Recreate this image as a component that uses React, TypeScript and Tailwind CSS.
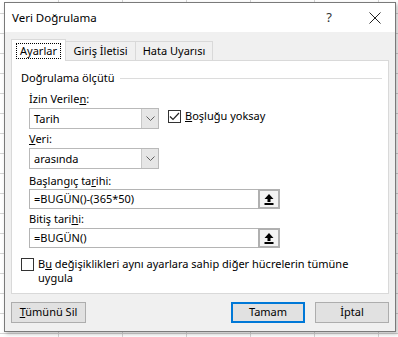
import React from "react";

const font = { fontFamily: '"Segoe UI", "Noto Sans", sans-serif' };

const Chevron = () => (
  <svg width="9" height="5" viewBox="0 0 9 5" fill="none">
    <path d="M0.5 0.5 L4.5 4.5 L8.5 0.5" stroke="#606060" strokeWidth="1" />
  </svg>
);

const UpArrow = () => (
  <svg width="10" height="11" viewBox="0 0 10 11">
    <path d="M5 0 L9.5 5 H6.5 V8 H3.5 V5 H0.5 Z" fill="#000" />
    <rect x="0.5" y="9" width="9" height="2" fill="#000" />
  </svg>
);

const Select = ({ value }: { value: string }) => (
  <div className="flex h-[21px] w-[130px] border border-[#b9b9b9] bg-white">
    <div className="flex-1 pl-[4px] leading-[19px]">{value}</div>
    <div className="flex w-[17px] items-center justify-center border-l border-[#c8c8c8] bg-[#e6e6e6]">
      <Chevron />
    </div>
  </div>
);

const RefInput = ({ value }: { value: string }) => (
  <div className="flex h-[20px] w-[251px] border border-[#b4b4b4] bg-white">
    <div className="flex-1 pl-[4px] leading-[18px]">{value}</div>
    <div className="-my-px -mr-px flex w-[22px] items-center justify-center border-2 border-[#b0b0b0] bg-[#f3f3f3]">
      <UpArrow />
    </div>
  </div>
);

const Check = ({ checked }: { checked?: boolean }) => (
  <div className="flex h-[13px] w-[13px] shrink-0 items-center justify-center border border-[#333] bg-white">
    {checked && (
      <svg width="11" height="9" viewBox="0 0 11 9" fill="none">
        <path d="M1 4.5 L4 7.5 L10 1" stroke="#222" strokeWidth="1.2" />
      </svg>
    )}
  </div>
);

export default function App() {
  return (
    <div
      className="h-[337px] w-[398px] overflow-hidden bg-white bg-[linear-gradient(#d4d4d4_1px,transparent_1px),linear-gradient(90deg,#d4d4d4_1px,transparent_1px)] bg-[size:64px_20px] bg-[position:58px_13px] pl-[4px] pt-[2px] text-[11px] text-black"
      style={font}
    >
      <div className="flex h-[330px] w-[392px] flex-col border border-[#7a7a7a] bg-[#f0f0f0] shadow-[2px_2px_4px_rgba(0,0,0,0.25)]">
        {/* title bar */}
        <div className="flex h-[29px] items-center bg-white pl-[7px]">
          <span className="text-[11.5px]">Veri Doğrulama</span>
          <span className="ml-auto mr-[37px] text-[13px] text-[#333]">?</span>
          <svg width="12" height="12" viewBox="0 0 12 12" className="mr-[14px]">
            <path d="M0.5 0.5 L11.5 11.5 M11.5 0.5 L0.5 11.5" stroke="#222" strokeWidth="1" />
          </svg>
        </div>

        <div className="flex flex-1 flex-col px-[6px] pt-[7px]">
          {/* tabs */}
          <div className="relative z-10 flex h-[21px] items-end">
            <div className="-mb-px flex h-[22px] w-[55px] items-center justify-center border border-b-0 border-[#d9d9d9] bg-white">
              <span className="border border-dotted border-black px-[3px] leading-[14px]">Ayarlar</span>
            </div>
            <div className="flex h-[19px] w-[70px] items-center justify-center border border-b-0 border-l-0 border-[#d9d9d9]">
              Giriş İletisi
            </div>
            <div className="flex h-[19px] w-[77px] items-center justify-center border border-b-0 border-l-0 border-[#d9d9d9]">
              Hata Uyarısı
            </div>
          </div>

          {/* panel */}
          <div className="flex h-[234px] w-[378px] flex-col border border-[#d9d9d9] bg-white pl-[9px] pt-[9px]">
            <div className="flex items-center pr-[6px]">
              <span className="leading-[16px]">Doğrulama ölçütü</span>
              <div className="ml-[6px] h-px flex-1 bg-[#dcdcdc]" />
            </div>

            <div className="pl-[8px]">
              <div className="mt-[5px] leading-[16px]">
                İzin Verile<span className="underline">n</span>:
              </div>
              <div className="mt-[1px] flex items-center">
                <Select value="Tarih" />
                <div className="ml-[9px] flex items-center self-start pt-px">
                  <Check checked />
                  <span className="ml-[4px] leading-[14px]">
                    <span className="underline">B</span>oşluğu yoksay
                  </span>
                </div>
              </div>

              <div className="mt-[2px] leading-[16px]">
                <span className="underline">V</span>eri:
              </div>
              <div className="mt-[1px]">
                <Select value="arasında" />
              </div>

              <div className="mt-[4px] leading-[16px]">
                Başlangıç ta<span className="underline">r</span>ihi:
              </div>
              <div>
                <RefInput value="=BUGÜN()-(365*50)" />
              </div>

              <div className="mt-[2px] leading-[16px]">
                Bitiş tari<span className="underline">h</span>i:
              </div>
              <div className="mt-[1px]">
                <RefInput value="=BUGÜN()" />
              </div>
            </div>

            <div className="mt-[9px] flex items-start">
              <div className="mt-[1px]">
                <Check />
              </div>
              <div className="ml-[4px] w-[322px] leading-[14px]">
                B<span className="underline">u</span> değişiklikleri aynı ayarlara sahip diğer hücrelerin tümüne uygula
              </div>
            </div>
          </div>

          {/* buttons */}
          <div className="mt-[8px] flex">
            <button className="h-[21px] w-[75px] border border-[#adadad] bg-[#e1e1e1] text-[11px]">
              <span className="underline">T</span>ümünü Sil
            </button>
            <button className="ml-auto h-[21px] w-[74px] border-2 border-[#0078d7] bg-[#e1e1e1] text-[11px]">
              Tamam
            </button>
            <button className="ml-[10px] h-[21px] w-[74px] border border-[#adadad] bg-[#e1e1e1] text-[11px]">
              İptal
            </button>
          </div>
        </div>
      </div>
    </div>
  );
}
